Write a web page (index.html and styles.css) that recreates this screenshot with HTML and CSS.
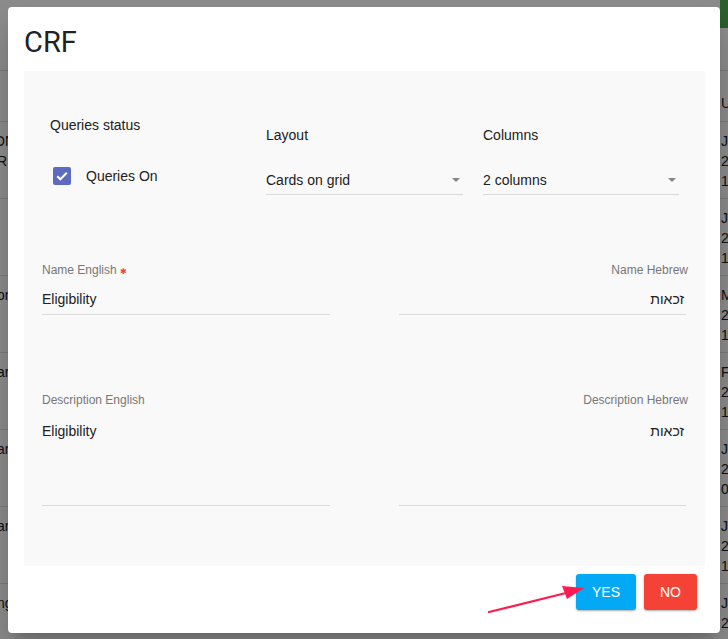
FILE: index.html
```html
<!DOCTYPE html>
<html>
<head>
<meta charset="utf-8">
<link rel="stylesheet" href="styles.css">
</head>
<body>
<div class="page">
  <div class="topbar"><span class="green-btn"></span></div>
  <div class="thead"><span class="lc"></span><span class="rc">Updated</span></div>
  <div class="trow"><span class="lc lc-first">ON<br><span class="lc-r">R</span></span><span class="rc">Jun 14,<br>2021<br>13:20</span></div>
  <div class="trow"><span class="lc"></span><span class="rc">Jun 10,<br>2021<br>11:05</span></div>
  <div class="trow"><span class="lc">on</span><span class="rc">Mar 2,<br>2021<br>10:42</span></div>
  <div class="trow"><span class="lc">ar</span><span class="rc">Feb 8,<br>2021<br>15:11</span></div>
  <div class="trow"><span class="lc">ar</span><span class="rc">Jan 20,<br>2021<br>09:30</span></div>
  <div class="trow"><span class="lc">ar</span><span class="rc">Jan 12,<br>2021<br>12:00</span></div>
  <div class="trow"><span class="lc">ng</span><span class="rc">Jan 5,<br>2021</span></div>
</div>
<div class="backdrop"></div>

<div class="dialog">
  <h1 class="title">CRF</h1>
  <div class="panel">
    <div class="row-top">
      <div class="col-queries">
        <div class="top-label">Queries status</div>
        <div class="check-row">
          <span class="checkbox">
            <svg width="18" height="18" viewBox="0 0 18 18"><path d="M4.2 9.3l3.1 3 6.5-6.6" fill="none" stroke="#fff" stroke-width="2"/></svg>
          </span>
          <span class="check-text">Queries On</span>
        </div>
      </div>
      <div class="col-select">
        <div class="top-label">Layout</div>
        <div class="select select-wide">
          <span>Cards on grid</span><span class="caret"></span>
        </div>
      </div>
      <div class="col-select">
        <div class="top-label">Columns</div>
        <div class="select">
          <span>2 columns</span><span class="caret"></span>
        </div>
      </div>
    </div>

    <div class="row-fields">
      <div class="field">
        <div class="f-label">Name English <span class="req">✱</span></div>
        <div class="f-input">Eligibility</div>
      </div>
      <div class="field field-rtl">
        <div class="f-label">Name Hebrew</div>
        <div class="f-input" dir="rtl">זכאות</div>
      </div>
    </div>

    <div class="row-fields row-desc">
      <div class="field">
        <div class="f-label">Description English</div>
        <div class="f-input f-area">Eligibility</div>
      </div>
      <div class="field field-rtl">
        <div class="f-label">Description Hebrew</div>
        <div class="f-input f-area" dir="rtl">זכאות</div>
      </div>
    </div>
  </div>
  <div class="actions">
    <button class="btn btn-yes">Yes</button>
    <button class="btn btn-no">No</button>
  </div>
</div>

<svg class="pointer" width="728" height="639" viewBox="0 0 728 639">
  <line x1="489" y1="612" x2="570" y2="592" stroke="#ff1a4f" stroke-width="2.2" stroke-linecap="round"/>
  <polygon points="584,588 562,586 567,599" fill="#ff1a4f"/>
</svg>
</body>
</html>
```
FILE: styles.css
```css
html, body {
  margin: 0;
  padding: 0;
}
body {
  width: 728px;
  height: 639px;
  overflow: hidden;
  position: relative;
  font-family: "Liberation Sans", Arial, sans-serif;
  font-size: 14px;
  color: #212121;
  background: #fff;
}

/* background page */
.page {
  height: 639px;
  overflow: hidden;
}
.topbar {
  height: 70px;
  border-bottom: 1px solid #e0e0e0;
  display: flex;
  justify-content: flex-end;
}
.green-btn {
  width: 8px;
  height: 28px;
  background: #4caf50;
}
.thead, .trow {
  display: flex;
  justify-content: space-between;
  border-bottom: 1px solid #e0e0e0;
  line-height: 20px;
  color: #222;
}
.thead {
  align-items: flex-end;
  padding-bottom: 8px;
  box-sizing: border-box;
  height: 51px;
}
.trow {
  padding-top: 9px;
  height: 67px;
}
.lc {
  margin-left: -3px;
  width: 40px;
  white-space: nowrap;
}
.lc-first {
  margin-left: -6px;
}
.lc-r {
  margin-left: 3px;
}
.rc {
  width: 7px;
  white-space: nowrap;
}
.backdrop {
  position: absolute;
  inset: 0;
  background: rgba(0, 0, 0, 0.45);
}

/* dialog */
.dialog {
  position: absolute;
  left: 8px;
  top: 7px;
  width: 712px;
  height: 626px;
  box-sizing: border-box;
  padding: 17px 15px 0 16px;
  background: #fff;
  border-radius: 4px;
  box-shadow: 0 11px 15px -7px rgba(0,0,0,.2), 0 24px 38px 3px rgba(0,0,0,.14);
}
.title {
  margin: 0 0 11px;
  font-family: Roboto, "Liberation Sans", sans-serif;
  font-weight: 400;
  font-size: 29px;
  line-height: 36px;
  color: #212121;
}
.panel {
  height: 495px;
  box-sizing: border-box;
  background: #f9f9f9;
  padding: 44px 18px 0 18px;
}
.row-top {
  display: grid;
  grid-template-columns: 216px 217px 196px;
  padding-left: 8px;
}
.top-label {
  line-height: 20px;
  color: #212121;
}
.check-row {
  margin-top: 29px;
  height: 24px;
  display: flex;
  align-items: center;
}
.checkbox {
  width: 18px;
  height: 18px;
  margin-left: 3px;
  margin-right: 15px;
  border-radius: 2px;
  background: #5c6bc0;
  display: flex;
}
.check-text {
  font-size: 14px;
  color: #212121;
}
.col-select {
  padding-top: 10px;
}
.select {
  margin-top: 25px;
  width: 196px;
  line-height: 20px;
  padding-bottom: 4px;
  border-bottom: 1px solid #d9d9d9;
  display: flex;
  justify-content: space-between;
  align-items: center;
}
.select-wide {
  width: 197px;
}
.caret {
  width: 0;
  height: 0;
  margin-right: 3px;
  border-left: 4px solid transparent;
  border-right: 4px solid transparent;
  border-top: 4px solid #858585;
}
.row-fields {
  margin-top: 67px;
  display: flex;
  justify-content: space-between;
}
.row-desc {
  margin-top: 77px;
}
.field {
  width: 288px;
}
.field-rtl {
  width: 287px;
  text-align: right;
  margin-right: 1px;
}
.field-rtl .f-label {
  margin-right: -2px;
}
.f-label {
  height: 16px;
  font-size: 12px;
  line-height: 16px;
  color: #777;
}
.req {
  display: inline-block;
  color: #f44336;
  font-family: "DejaVu Sans", sans-serif;
  font-size: 8px;
  line-height: 8px;
  vertical-align: 0;
}
.f-input {
  margin-top: 11px;
  line-height: 20px;
  padding-bottom: 5px;
  border-bottom: 1px solid #d9d9d9;
  color: #212121;
}
.field-rtl .f-input {
  padding-right: 2px;
}
.f-area {
  margin-top: 13px;
  height: 84px;
  padding-bottom: 0;
}
.actions {
  margin-top: 8px;
  display: flex;
  justify-content: flex-end;
  gap: 8px;
  padding-right: 8px;
}
.btn {
  height: 36px;
  padding: 0 16px;
  border: none;
  border-radius: 3px;
  font-family: "Liberation Sans", Arial, sans-serif;
  font-size: 14px;
  text-transform: uppercase;
  color: #fff;
  box-shadow: 0 1px 3px rgba(0,0,0,.2), 0 1px 1px rgba(0,0,0,.14);
}
.btn-yes {
  background: #03a9f4;
}
.btn-no {
  background: #f44336;
}
.pointer {
  position: absolute;
  left: 0;
  top: 0;
  pointer-events: none;
}
```
